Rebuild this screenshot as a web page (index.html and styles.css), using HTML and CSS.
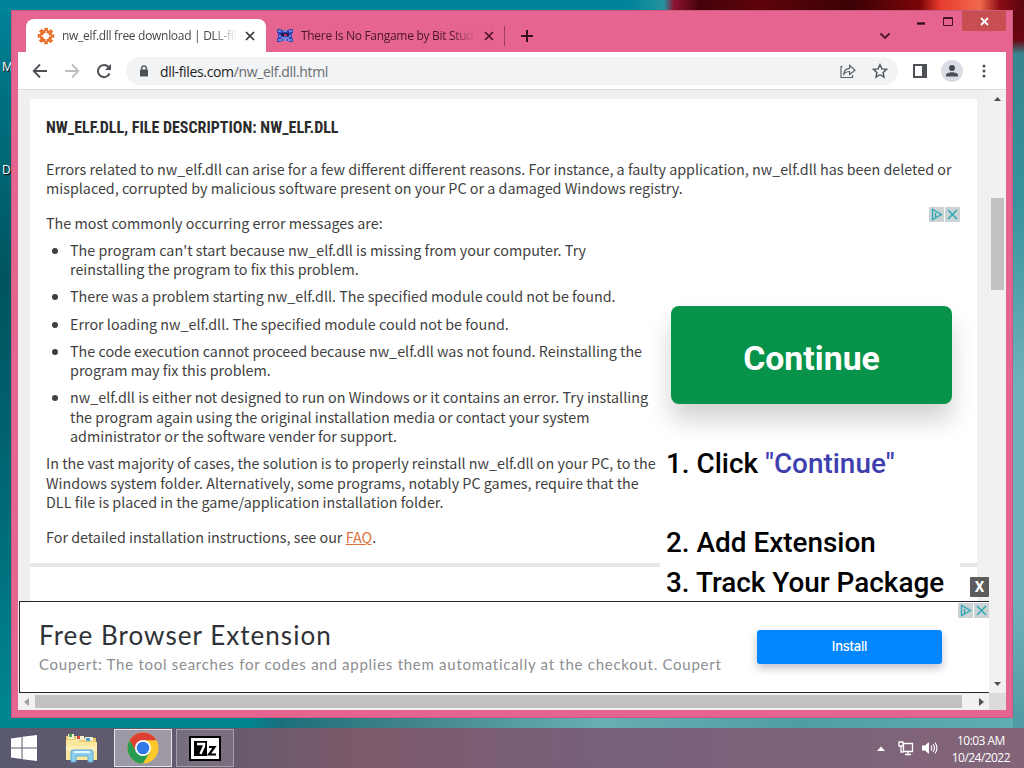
FILE: index.html
```html
<!DOCTYPE html>
<html lang="en">
<head>
  <meta charset="UTF-8">
  <meta name="viewport" content="width=device-width, initial-scale=1.0">
  <title>nw_elf.dll free download | DLL-files.com</title>
  <link rel="stylesheet" href="styles.css">
</head>
<body>
  <div class="desktop">
    <span class="desk-label label-m">M</span>
    <span class="desk-label label-d">D</span>

    <div class="window">
      <div class="tabstrip">
        <div class="tab active">
          <svg class="favicon" width="18" height="18" viewBox="0 0 18 18">
            <circle cx="9" cy="9" r="4.700" fill="none" stroke="#e8702a" stroke-width="3.200"/>
            <circle cx="9" cy="9" r="7" fill="none" stroke="#e8702a" stroke-width="2.600" stroke-dasharray="3.500 1.998" stroke-dashoffset="1.800"/>
            <path d="M9 4v2M9 12v2M4 9h2M12 9h2" stroke="#fff" stroke-width="1"/>
          </svg>
          <span class="tab-title">nw_elf.dll free download | DLL-fil</span>
          <svg class="close" width="10" height="10" viewBox="0 0 10 10"><path d="M1 1l8 8M9 1L1 9" stroke="#333" stroke-width="1.7"/></svg>
        </div>
        <div class="tab">
          <svg class="favicon" width="18" height="18" viewBox="0 0 18 18">
            <path d="M1 2h4v1h8V2h4v4h-1v5h1v4h-4v-1H5v1H1v-4h1V6H1z" fill="#3345b8"/>
            <path d="M2 4h3M7 4h4M13 4h3M2 13h4M7 13h4M12 13h4M5 11h8M3 9h2M13 9h2" stroke="#b6bdf0" stroke-width="1.2"/>
            <path d="M5 6h8v3H5z" fill="#141a55"/>
            <path d="M8 7h3v2H8z" fill="#d8304c"/>
          </svg>
          <span class="tab-title">There Is No Fangame by Bit Stud</span>
          <svg class="close" width="10" height="10" viewBox="0 0 10 10"><path d="M1 1l8 8M9 1L1 9" stroke="#4b1429" stroke-width="1.7"/></svg>
        </div>
        <span class="tab-divider"></span>
        <svg class="new-tab" width="12" height="12" viewBox="0 0 12 12"><path d="M6 0v12M0 6h12" stroke="#3a0f20" stroke-width="2"/></svg>
        <svg class="tab-search" width="12" height="8" viewBox="0 0 12 8"><path d="M1.500 1.500L6 6l4.500-4.500" fill="none" stroke="#4b1429" stroke-width="1.8"/></svg>
        <div class="controls">
          <svg class="minimize" width="8" height="3" viewBox="0 0 8 3"><path d="M0 1.500h8" stroke="#3a0f20" stroke-width="2.400"/></svg>
          <svg class="maximize" width="10" height="9" viewBox="0 0 10 9"><path d="M.5.5h9v8h-9zM0 1.500h10" fill="none" stroke="#4b1429"/></svg>
          <span class="win-close"><svg width="9" height="9" viewBox="0 0 9 9"><path d="M1 1l7 7M8 1L1 8" stroke="#fff" stroke-width="1.8"/></svg></span>
        </div>
      </div>

      <div class="toolbar">
        <svg class="nav" width="16" height="16" viewBox="0 0 16 16"><path d="M15 8H2M8 1.500L1.700 8 8 14.500" fill="none" stroke="#4d5156" stroke-width="1.800"/></svg>
        <svg class="nav" width="16" height="16" viewBox="0 0 16 16"><path d="M1 8h13M8 1.500L14.300 8 8 14.500" fill="none" stroke="#bbbdc0" stroke-width="1.800"/></svg>
        <svg class="nav" width="16" height="16" viewBox="0 0 16 16"><path d="M13.600 10.500A6.100 6.100 0 1 1 12.600 4" fill="none" stroke="#4d5156" stroke-width="2"/><path d="M15 1v6H9z" fill="#4d5156"/></svg>
        <div class="omnibox">
          <svg width="10" height="12" viewBox="0 0 10 12"><path d="M2.700 5V3.200a2.300 2.300 0 0 1 4.600 0V5" fill="none" stroke="#4d5156" stroke-width="1.300"/><rect x="1" y="4.400" width="8" height="7.100" rx=".8" fill="#4d5156"/></svg>
          <span class="url"><b>dll-files.com</b>/nw_elf.dll.html</span>
          <svg class="share" width="16" height="16" viewBox="0 0 16 16"><path d="M2.500 3.500H1v11h11.500V12M3.800 11c.4-3.600 2.500-5.400 5.800-5.600V2.300L15 7.200l-5.400 4.200V8.500C7 8.500 5.200 9.300 3.800 11z" fill="none" stroke="#5f6368" stroke-width="1.200"/></svg>
          <svg width="16" height="16" viewBox="0 0 16 16"><path d="M8 1.700l1.900 4.200 4.600.5-3.400 3.100.9 4.500-4-2.300L4 14l.9-4.500L1.500 6.400l4.600-.5z" fill="none" stroke="#4d5156" stroke-width="1.400"/></svg>
        </div>
        <svg class="panel" width="14" height="14" viewBox="0 0 14 14"><path d="M1 1h12v12H1z" fill="#fff" stroke="#4d5156" stroke-width="2"/><path d="M9 1h4v12H9z" fill="#4d5156"/></svg>
        <svg class="avatar" width="22" height="22" viewBox="0 0 22 22"><circle cx="11" cy="11" r="11" fill="#dadde3"/><circle cx="11" cy="8" r="3" fill="#474d5a"/><path d="M5 16.500v-1.300c0-4 12-4 12 0v1.300z" fill="#474d5a"/></svg>
        <svg width="4" height="14" viewBox="0 0 4 14"><circle cx="2" cy="2" r="1.500" fill="#4d5156"/><circle cx="2" cy="7" r="1.500" fill="#4d5156"/><circle cx="2" cy="12" r="1.500" fill="#4d5156"/></svg>
      </div>

      <div class="viewport">
        <div class="page">
          <section class="card">
            <h1>NW_ELF.DLL, FILE DESCRIPTION: NW_ELF.DLL</h1>
            <p class="intro">Errors related to nw_elf.dll can arise for a few different different reasons. For instance, a faulty application, nw_elf.dll has been deleted or<br>misplaced, corrupted by malicious software present on your PC or a damaged Windows registry.</p>
            <div class="columns">
              <div class="text">
                <p>The most commonly occurring error messages are:</p>
                <ul>
                  <li>The program can't start because nw_elf.dll is missing from your computer. Try<br>reinstalling the program to fix this problem.</li>
                  <li>There was a problem starting nw_elf.dll. The specified module could not be found.</li>
                  <li>Error loading nw_elf.dll. The specified module could not be found.</li>
                  <li>The code execution cannot proceed because nw_elf.dll was not found. Reinstalling the<br>program may fix this problem.</li>
                  <li>nw_elf.dll is either not designed to run on Windows or it contains an error. Try installing<br>the program again using the original installation media or contact your system<br>administrator or the software vender for support.</li>
                </ul>
                <p>In the vast majority of cases, the solution is to properly reinstall nw_elf.dll on your PC, to the<br>Windows system folder. Alternatively, some programs, notably PC games, require that the<br>DLL file is placed in the game/application installation folder.</p>
                <p class="faq">For detailed installation instructions, see our <a href="#">FAQ</a>.</p>
              </div>
              <aside class="ad">
                <div class="adchoices">
                  <svg width="15" height="15" viewBox="0 0 15 15"><path d="M3.500 2.500v10l9-5zM6.500 6v4" fill="none" stroke="#2fa8b5" stroke-width="1.400"/></svg>
                  <svg width="15" height="15" viewBox="0 0 15 15"><path d="M3 3l9 9M12 3l-9 9" stroke="#2fa8b5" stroke-width="1.500"/></svg>
                </div>
                <div class="continue">Continue</div>
                <p class="step one">1. Click <span>"Continue"</span></p>
                <p class="step two">2. Add Extension</p>
                <p class="step">3. Track Your Package</p>
              </aside>
            </div>
          </section>
          <section class="card next"></section>
        </div>
        <div class="vscroll">
          <svg width="7" height="4" viewBox="0 0 7 4"><path d="M0 4l3.500-4L7 4z" fill="#505050"/></svg>
          <span class="thumb"></span>
          <svg class="down" width="7" height="4" viewBox="0 0 7 4"><path d="M0 0h7L3.500 4z" fill="#505050"/></svg>
        </div>
        <span class="banner-close">X</span>
        <div class="banner">
          <div class="banner-text">
            <h2>Free Browser Extension</h2>
            <p>Coupert: The tool searches for codes and applies them automatically at the checkout. Coupert</p>
          </div>
          <div class="install">Install</div>
          <div class="adchoices">
            <svg width="15" height="15" viewBox="0 0 15 15"><path d="M3.500 2.500v10l9-5zM6.500 6v4" fill="none" stroke="#2fa8b5" stroke-width="1.400"/></svg>
            <svg width="15" height="15" viewBox="0 0 15 15"><path d="M3 3l9 9M12 3l-9 9" stroke="#2fa8b5" stroke-width="1.500"/></svg>
          </div>
        </div>
      </div>

      <div class="hscroll">
        <svg width="5" height="8" viewBox="0 0 5 8"><path d="M5 0v8L0 4z" fill="#a0a0a0"/></svg>
        <span class="thumb"></span>
        <svg class="right" width="5" height="8" viewBox="0 0 5 8"><path d="M0 0v8l5-4z" fill="#505050"/></svg>
        <span class="corner"></span>
      </div>
    </div>

    <div class="taskbar">
      <svg class="start" width="26" height="26" viewBox="0 0 26 26"><path d="M0 3.500L10.500 2v10.500H0zM11.500 1.800L26 0v12.500H11.500zM0 13.500h10.500V24L0 22.500zM11.500 13.500H26V26l-14.500-1.800z" fill="#fff"/></svg>
      <svg class="explorer" width="34" height="30" viewBox="0 0 34 30">
        <path d="M1 3h11l2 2h17v21H1z" fill="#e7cb6c"/>
        <path d="M3 1h6v5H3z" fill="#f5efd0"/><path d="M4 1h3v3H4z" fill="#4fa34c"/>
        <path d="M11 3h8v4h-8z" fill="#f5efd0"/><path d="M12 3h3v3h-3z" fill="#d9483a"/>
        <path d="M20 4h8v4h-8z" fill="#f5efd0"/><path d="M21 5h4v3h-4z" fill="#4b9fd4"/>
        <path d="M1 7h12l2 2h17v18H1z" fill="#f8e79c"/>
        <path d="M1 13h31v5H1z" fill="#fbefb5"/>
        <path d="M6 29V19q0-2 2-2h18q2 0 2 2v10h-5v-6H11v6z" fill="#8fcdef" stroke="#58a9d6"/>
        <path d="M9 19h16" stroke="#e2f6ff" stroke-width="2"/>
      </svg>
      <div class="task chrome">
        <svg width="32" height="32" viewBox="0 0 32 32">
          <circle cx="16" cy="16" r="15.500" fill="#fdc92b"/>
          <path d="M2.600 8.200A15.500 15.500 0 0 1 29.400 8.200H16L9.200 20z" fill="#dd3f32"/>
          <path d="M2.600 8.200A15.500 15.500 0 0 0 16 31.500L22.800 20 9.200 20z" fill="#279c50"/>
          <circle cx="16" cy="16" r="8" fill="#fff"/><circle cx="16" cy="16" r="6.300" fill="#3278e6"/>
        </svg>
      </div>
      <div class="task">
        <svg width="32" height="25" viewBox="0 0 32 25"><path d="M1 1h30v23H1z" fill="#fff" stroke="#000" stroke-width="2"/><path d="M5 5h13v15H5z" fill="#000"/><path d="M8 8h7v2l-3.500 8" fill="none" stroke="#fff" stroke-width="2.400"/><path d="M20 11h5.500L20 18.500h7" fill="none" stroke="#000" stroke-width="2.200"/></svg>
      </div>
      <div class="tray">
        <svg width="8" height="5" viewBox="0 0 8 5"><path d="M0 5l4-4.500L8 5z" fill="#fff"/></svg>
        <svg class="network" width="16" height="15" viewBox="0 0 16 15"><path d="M5.500 2.500h9v8h-9zM10 10.500v3M7 13.500h6M1 1h4v4H1zM3 5v6h2.500" fill="none" stroke="#fff" stroke-width="1.300"/></svg>
        <svg class="volume" width="16" height="14" viewBox="0 0 16 14"><path d="M0 4.500h3L7 1v12L3 9.500H0z" fill="#fff"/><path d="M9 4.500q1.600 2.500 0 5M11 3q3 4 0 8M13 1.500q4 5.500 0 11" fill="none" stroke="#fff" stroke-width="1.100"/></svg>
        <div class="clock">10:03 AM<br>10/24/2022</div>
      </div>
    </div>
  </div>
</body>
</html>
```
FILE: styles.css
```css
* {
  box-sizing: border-box;
}

body {
  margin: 0;
  font-family: "Open Sans", sans-serif;
}

h1, h2, p, ul {
  margin: 0;
  padding: 0;
  font-weight: normal;
}

svg {
  display: block;
  flex: none;
}

.desktop {
  position: relative;
  width: 1024px;
  height: 768px;
  overflow: hidden;
  display: flex;
  flex-direction: column;
  justify-content: flex-end;
  background:
    linear-gradient(90deg, #00849a 0 630px, #26939f 664px, #8f1230 674px, #45020c 700px, #5e0309 760px, #3a0206 850px, #7a0508 920px, #e83b30 940px, #f06a4c 980px, #8a0b14 1000px, #5b0610 1024px) 0 0 / 1024px 11px no-repeat,
    linear-gradient(180deg, #5b0610 0, #6a0410 40px, #37858e 54px, #35939d 200px, #6fb0b8 380px, #6fb0b8 600px, #4f9ba3 728px) 1013px 0 / 11px 728px no-repeat,
    linear-gradient(90deg, #008490 0 250px, #1b6f7c 280px, #3f8389 400px, #68aeb2 600px, #4e9ea4 800px, #5fb0b4 1024px) 0 717px / 1024px 11px no-repeat,
    linear-gradient(180deg, #00849a 0, #007080 100px, #00545f 280px, #006875 500px, #008490 700px);
}

.desk-label {
  position: absolute;
  left: 2px;
  color: #fff;
  font-size: 12px;
  text-shadow: 1px 1px 1px #000;
}

.label-m {
  top: 58px;
}

.label-d {
  top: 161px;
}

.window {
  position: absolute;
  left: 11px;
  top: 10px;
  width: 1002px;
  height: 708px;
  padding: 0 6px 7px;
  background: #e66590;
  border: 1px solid #c9597f;
  display: flex;
  flex-direction: column;
}

.tabstrip {
  height: 41px;
  display: flex;
  align-items: flex-end;
  position: relative;
}

.tab {
  height: 33px;
  display: flex;
  align-items: center;
  width: 240px;
  padding: 0 11px;
  margin-left: 8px;
  border-radius: 8px 8px 0 0;
  color: #4b1429;
}

.tab + .tab {
  margin-left: -1px;
  padding-right: 10px;
  width: 239px;
}

.tab.active {
  background: #fff;
  color: #45474a;
}

.tab-title {
  flex: 1;
  margin: 0 8px 0 7px;
  font-size: 12px;
  letter-spacing: -0.3px;
  white-space: nowrap;
  overflow: hidden;
  -webkit-mask-image: linear-gradient(90deg, #000 86%, transparent);
  mask-image: linear-gradient(90deg, #000 86%, transparent);
}

.tab-divider {
  width: 1px;
  height: 20px;
  margin-bottom: 6px;
  background: #a13d62;
}

.new-tab {
  margin: 0 0 10px 16px;
}

.tab-search {
  margin: 0 115px 12px auto;
}

.controls {
  position: absolute;
  right: 0;
  top: 0;
  height: 20px;
  display: flex;
  align-items: center;
}

.controls .minimize {
  margin-top: 4px;
}

.controls .maximize {
  margin: 0 9px 0 18px;
}

.win-close {
  width: 44px;
  height: 20px;
  display: flex;
  align-items: center;
  justify-content: center;
  background: #c74f52;
}

.toolbar {
  height: 38px;
  display: flex;
  align-items: center;
  background: #fff;
  border-bottom: 1px solid #dcdcdc;
  padding: 0 20px 0 14px;
}

.nav {
  margin-right: 16px;
}

.omnibox {
  flex: 1;
  height: 28px;
  margin: 0 15px 0 -2px;
  padding: 0 10px 0 13px;
  border-radius: 14px;
  background: #f1f3f4;
  display: flex;
  align-items: center;
}

.url {
  margin-left: 11px;
  padding-top: 1px;
  font-size: 14px;
  letter-spacing: -0.35px;
  color: #6a6d70;
}

.url b {
  font-weight: normal;
  color: #222;
}

.share {
  margin-left: auto;
  margin-right: 16px;
}

.avatar {
  margin: 0 19px 0 14px;
}

.viewport {
  position: relative;
  flex: 1;
  display: flex;
  overflow: hidden;
  background: #f1f0ee;
}

.page {
  flex: 1;
  padding: 9px 12px 0;
  font-family: "Noto Sans CJK SC", sans-serif;
  font-size: 14.33px;
  line-height: 19.2px;
  color: #3f3f3f;
}

.card {
  height: 468px;
  padding: 18px 16px 0;
  background: #fff;
  border-bottom: 4px solid #e9e6e4;
  white-space: nowrap;
}

.card.next {
  height: 120px;
}

.card h1 {
  font: bold 16px/22px "Roboto", sans-serif;
  font-stretch: 75%;
  color: #2c2c2c;
}

.intro {
  margin: 20px 0 8px;
}

.columns {
  display: flex;
  height: 0;
}

.text {
  width: 614px;
  padding-top: 8px;
}

.text ul {
  padding-left: 24px;
  margin: 7.2px 0 7px;
}

.text li {
  margin-bottom: 7.8px;
  line-height: 19.4px;
}

.faq {
  margin-top: 16.4px;
}

.faq a {
  color: #e0703c;
}

.ad {
  width: 300px;
  height: 395px;
  margin-top: 2px;
  flex: none;
  position: relative;
  background: #fff;
  font-family: "Roboto", sans-serif;
}

.adchoices {
  display: flex;
  justify-content: flex-end;
  gap: 1px;
}

.adchoices svg {
  background: #cbd3d5;
}

.continue {
  width: 281px;
  height: 98px;
  margin: 84px 0 40px 11px;
  border-radius: 8px;
  background: #07944a;
  color: #fff;
  font-size: 33.8px;
  font-weight: bold;
  line-height: 106px;
  text-align: center;
  box-shadow: 0 16px 24px rgba(0, 0, 0, 0.18);
}

.step {
  padding-left: 6px;
  font-size: 27.9px;
  font-weight: 500;
  line-height: 40px;
  color: #000;
}

.step.one {
  margin-bottom: 39px;
}

.step span {
  color: #4040b0;
}

.vscroll {
  width: 17px;
  display: flex;
  flex-direction: column;
  align-items: center;
  padding-top: 7px;
  background: #f1f1f1;
}

.vscroll .thumb {
  width: 13px;
  height: 92px;
  margin-top: 97px;
  background: #c1c1c1;
}

.vscroll .down {
  margin: auto 0 7px;
}

.banner {
  position: absolute;
  left: 1px;
  bottom: 0;
  width: 970px;
  height: 92px;
  display: flex;
  background: #fff;
  border: 1px solid #25252b;
  border-right: none;
}

.banner-text {
  width: 737px;
  padding: 17px 0 0 19px;
  font-family: "Lato", sans-serif;
  white-space: nowrap;
}

.banner h2 {
  font-size: 26px;
  line-height: 32px;
  letter-spacing: 1.05px;
  color: #303238;
}

.banner p {
  font-size: 15px;
  line-height: 26px;
  letter-spacing: 0.73px;
  color: #8c8e91;
}

.install {
  width: 185px;
  height: 34px;
  margin-top: 28px;
  border-radius: 3px;
  background: #0286fd;
  color: #fff;
  font: 500 13px/33px "Inter", sans-serif;
  letter-spacing: -0.2px;
  text-align: center;
  box-shadow: 0 4px 8px rgba(0, 0, 60, 0.25);
}

.banner .adchoices {
  margin: 1px 0 0 auto;
}

.banner-close {
  position: absolute;
  right: 17px;
  bottom: 96px;
  width: 19px;
  height: 20px;
  background: #5b5b5b;
  border-radius: 1px;
  color: #fff;
  font: bold 15px/21px "Roboto", sans-serif;
  text-align: center;
}

.hscroll {
  height: 17px;
  display: flex;
  align-items: center;
  padding-left: 6px;
  background: #f1f1f1;
}

.hscroll .thumb {
  width: 927px;
  height: 13px;
  margin-left: 6px;
  background: #c1c1c1;
}

.hscroll .right {
  margin-left: 17px;
}

.corner {
  width: 17px;
  height: 17px;
  margin-left: auto;
  background: #dcdcdc;
}

.taskbar {
  height: 40px;
  display: flex;
  align-items: center;
  padding-left: 11px;
  background: linear-gradient(90deg, #59596f, #685b6d 240px, #7c5a6a 360px, #78607a 600px, #836578);
}

.explorer {
  margin: 0 15px 0 28px;
}

.task {
  width: 58px;
  height: 38px;
  margin-right: 4px;
  display: flex;
  align-items: center;
  justify-content: center;
  background: rgba(255, 255, 255, 0.12);
  border: 1px solid rgba(255, 255, 255, 0.35);
}

.task.chrome {
  background: rgba(255, 255, 255, 0.38);
  border-color: #e6e4ea;
}

.tray {
  margin-left: auto;
  padding-right: 14px;
  display: flex;
  align-items: center;
}

.network {
  margin: 0 8px 0 13px;
}

.clock {
  margin-left: 14px;
  padding-top: 2px;
  font-size: 12px;
  line-height: 17px;
  letter-spacing: -0.55px;
  color: #fff;
  text-align: center;
}
```
